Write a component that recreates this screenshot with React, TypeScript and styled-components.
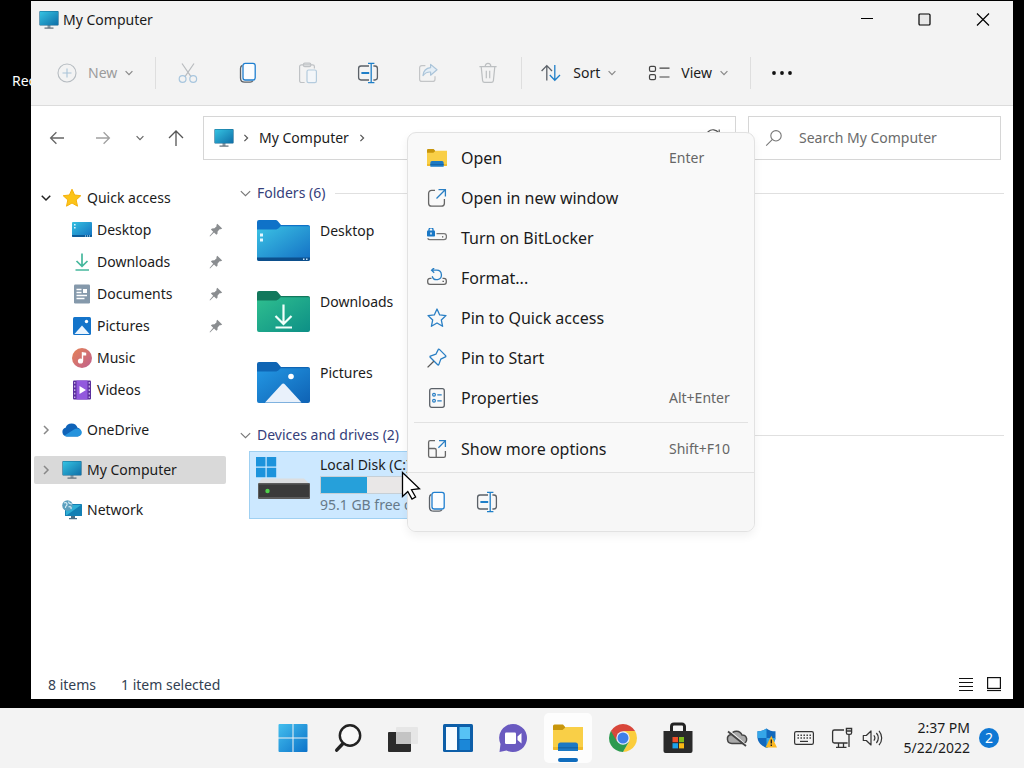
import React from 'react';
import styled, { createGlobalStyle, css } from 'styled-components';

const GlobalStyle = createGlobalStyle`
  * {
    box-sizing: border-box;
  }

  body {
    margin: 0;
    background: #000;
    font-family: 'Noto Sans', 'Open Sans', sans-serif;
    font-size: 14px;
    line-height: 20px;
    color: #1b1b1b;
  }

  button,
  input {
    font: inherit;
    color: inherit;
  }

  button {
    display: flex;
    align-items: center;
    justify-content: center;
    padding: 0;
    border: 0;
    background: none;
    cursor: default;
  }

  svg {
    display: block;
    flex: none;
  }
`;

/* ---------- icons ---------- */

type IconProps = { size?: number };

const MonitorIcon = ({ size = 20 }: IconProps) => (
  <svg width={size} height={size} viewBox="0 0 20 20">
    <defs>
      <linearGradient id="screen" x1="0" y1="0" x2="1" y2="1">
        <stop offset="0" stopColor="#35c3e2" />
        <stop offset="1" stopColor="#0f6fa8" />
      </linearGradient>
    </defs>
    <path d="M8.5 15h3v3h-3z" fill="#8b9aa5" />
    <path d="M5.5 17.5h9v1.2h-9z" fill="#5c6b76" />
    <rect x=".4" y="1" width="19.2" height="14.5" rx=".8" fill="#14668f" />
    <rect x="1" y="1.5" width="18" height="13.5" fill="url(#screen)" />
  </svg>
);

const Chevron = ({ dir, size = 8, color = '#555' }: { dir: 'down' | 'right'; size?: number; color?: string }) => (
  <svg width={size} height={size} viewBox="0 0 8 8" fill="none" stroke={color} strokeWidth={size > 10 ? 0.8 : 1.2}>
    <path d={dir === 'down' ? 'M.6 2.2 4 5.6l3.4-3.4' : 'M2.4.8 5.6 4 2.4 7.2'} />
  </svg>
);

const PlusCircleIcon = () => (
  <svg width="20" height="20" viewBox="0 0 20 20" fill="none" strokeWidth="1.1">
    <circle cx="10" cy="10" r="9" stroke="#b6bcc1" />
    <path d="M10 5.5v9M5.5 10h9" stroke="#a9c3d8" />
  </svg>
);

const CutIcon = () => (
  <svg width="20" height="22" viewBox="0 0 20 22" fill="none" strokeWidth="1.2">
    <path d="m4 1.5 9 13.2M16 1.5 7 14.7" stroke="#b9bcbf" />
    <circle cx="4.6" cy="17" r="3.4" stroke="#a8c6de" />
    <circle cx="15.2" cy="17" r="3.4" stroke="#a8c6de" />
  </svg>
);

const CopyIcon = () => (
  <svg width="20" height="22" viewBox="0 0 20 22" fill="none" strokeWidth="1.3">
    <path d="M4.4 3.4C3.1 3.9 2.5 4.9 2.5 6.4V16c0 2.6 1.6 4.2 4.2 4.2h5.5c1.3 0 2.2-.6 2.7-1.5" stroke="#5b6168" />
    <rect x="5" y="1.4" width="12.2" height="16.6" rx="2.2" fill="#fbfdff" stroke="#1f7fd0" />
  </svg>
);

const PasteIcon = () => (
  <svg width="20" height="22" viewBox="0 0 20 22" fill="none" strokeWidth="1.2">
    <path d="M6.6 20.5H3.4c-1 0-1.8-.8-1.8-1.8V4.6c0-1 .8-1.8 1.8-1.8h11.2c1 0 1.8.8 1.8 1.8v2" stroke="#bfc2c5" />
    <rect x="5.4" y="1.2" width="7.4" height="3.4" rx="1.4" stroke="#bfc2c5" />
    <rect x="9" y="8" width="9.4" height="12.6" rx="1.6" fill="#f3f6f9" stroke="#b4cbdd" />
  </svg>
);

const RenameIcon = () => (
  <svg width="22" height="22" viewBox="0 0 22 22" fill="none" strokeWidth="1.3">
    <path d="M12 4H4C2.6 4 1.6 5 1.6 6.4v9.2C1.6 17 2.6 18 4 18h8M16.4 4H18c1.4 0 2.4 1 2.4 2.4v9.2c0 1.4-1 2.4-2.4 2.4h-1.6" stroke="#5b6168" />
    <path d="M14.2 1.6v18.8M11 1.4h6.4M11 20.6h6.4" stroke="#1f7fc8" />
    <path d="M4.4 11h7.8" stroke="#1f7fc8" strokeWidth="2" />
  </svg>
);

const ShareIcon = () => (
  <svg width="20" height="20" viewBox="0 0 20 20" fill="none" strokeWidth="1.2" strokeLinejoin="round">
    <path d="M7.4 2.6H3.8c-1.3 0-2.2.9-2.2 2.2v11.4c0 1.3.9 2.2 2.2 2.2h11c1.3 0 2.2-.9 2.2-2.2v-3" stroke="#c3c5c7" />
    <path d="M12.6 1.4 19 6.8l-6.4 5.4V9c-3.4-.2-5.6.8-7.6 3.6C5.4 8 8 5 12.6 4.6z" fill="#e4eef6" stroke="#aac4d9" />
  </svg>
);

const TrashIcon = () => (
  <svg width="20" height="22" viewBox="0 0 20 22" fill="none" stroke="#bcbfc1" strokeWidth="1.2">
    <path d="M1.4 4.6h17.2M3.2 4.6l1.4 14c.1 1 .9 1.8 2 1.8h6.8c1.1 0 1.9-.8 2-1.8l1.4-14M7.2 4.4C7.2 2.6 8.4 1.4 10 1.4s2.8 1.2 2.8 3M8.3 8.8v7.4M11.7 8.8v7.4" />
  </svg>
);

const SortIcon = () => (
  <svg width="22" height="20" viewBox="0 0 22 20" fill="none" strokeWidth="1.3">
    <path d="M6.8 17.5V2.6M1.6 8l5.2-5.4L12 8" stroke="#5b6168" />
    <path d="M14.8 2v15M9.8 12l5 5.2L20 12" stroke="#1f7fc8" />
  </svg>
);

const ViewIcon = () => (
  <svg width="22" height="18" viewBox="0 0 22 18" fill="none" stroke="#444" strokeWidth="1.2">
    <rect x="1.5" y="2.3" width="6" height="5" rx="1.4" />
    <rect x="1.5" y="10.7" width="6" height="5" rx="1.4" />
    <path d="M11.5 4.2h10M11.5 13h10" />
  </svg>
);

const DotsIcon = () => (
  <svg width="22" height="6" viewBox="0 0 22 6" fill="#111">
    <circle cx="3" cy="3" r="1.9" />
    <circle cx="11" cy="3" r="1.9" />
    <circle cx="19" cy="3" r="1.9" />
  </svg>
);

const ArrowIcon = ({ dir, color }: { dir: 'left' | 'right' | 'up'; color: string }) => (
  <svg width="18" height="18" viewBox="0 0 18 18" fill="none" stroke={color} strokeWidth="1.3">
    {dir === 'left' && <path d="M16 9H2.6M8.4 3.2 2.6 9l5.8 5.8" />}
    {dir === 'right' && <path d="M2 9h13.4M9.6 3.2 15.4 9l-5.8 5.8" />}
    {dir === 'up' && <path d="M9 17V2M2 9l7-7 7 7" />}
  </svg>
);

const SearchIcon = () => (
  <svg width="18" height="18" viewBox="0 0 18 18" fill="none" stroke="#777" strokeWidth="1.1">
    <circle cx="11" cy="6.8" r="5.2" />
    <path d="m7.2 10.6-6 6" />
  </svg>
);

const RefreshIcon = () => (
  <svg width="18" height="18" viewBox="0 0 18 18" fill="none" stroke="#555" strokeWidth="1.2">
    <path d="M15.5 9.5A6.8 6.8 0 1 1 14.8 4M15.2.5v4H11" />
  </svg>
);

const StarIcon = () => (
  <svg width="20" height="20" viewBox="0 0 20 20">
    <path d="m10 1.2 2.6 5.8 6.2.7-4.6 4.2 1.3 6.3L10 15l-5.5 3.2 1.3-6.3-4.6-4.2 6.2-.7z" fill="#fcc419" stroke="#f5b10c" strokeLinejoin="round" />
  </svg>
);

const DesktopIcon = () => (
  <svg width="20" height="20" viewBox="0 0 20 20">
    <defs>
      <linearGradient id="desk" x1="0" y1="0" x2="1" y2="1">
        <stop offset="0" stopColor="#36c0e0" />
        <stop offset="1" stopColor="#1270c0" />
      </linearGradient>
    </defs>
    <rect y="2" width="20" height="15" rx="1" fill="url(#desk)" />
    <path d="M0 15h20v1a1 1 0 0 1-1 1H1a1 1 0 0 1-1-1z" fill="#0d5c99" />
    <path d="M2 4h1.6v1.6H2zM2 7h1.6v1.6H2zM13 15.5h1v1h-1zM15 15.5h1v1h-1zM17 15.5h1v1h-1z" fill="#d8f4ff" />
  </svg>
);

const DownloadIcon = () => (
  <svg width="20" height="20" viewBox="0 0 20 20" fill="none" stroke="#45b89d" strokeWidth="1.7">
    <path d="M10 1.5v12.8M4.5 9 10 14.4 15.5 9M3.5 18H17" />
  </svg>
);

const DocumentIcon = () => (
  <svg width="20" height="20" viewBox="0 0 20 20">
    <rect x="2" y=".5" width="16" height="19" rx="1.2" fill="#8599ab" />
    <path d="M4.5 5.5h5M4.5 8.5h5M4.5 11.5H15M4.5 14.5h8" stroke="#fff" strokeWidth="1.3" />
    <path d="M11 5h4v4h-4z" fill="#fff" />
  </svg>
);

const PictureIcon = () => (
  <svg width="20" height="20" viewBox="0 0 20 20">
    <rect x="1" y="1" width="18" height="18" rx="1.5" fill="#1474ca" />
    <path d="m2.5 18 7.5-8.5 7.5 8.5z" fill="#eaf5ff" />
    <circle cx="14.5" cy="5.5" r="1.7" fill="#fff" />
  </svg>
);

const MusicIcon = () => (
  <svg width="20" height="20" viewBox="0 0 20 20">
    <defs>
      <linearGradient id="music" x1="0" y1="0" x2="1" y2="1">
        <stop offset="0" stopColor="#e58355" />
        <stop offset="1" stopColor="#c0608f" />
      </linearGradient>
    </defs>
    <circle cx="10" cy="10" r="10" fill="url(#music)" />
    <circle cx="8.5" cy="13" r="2.6" fill="#fff" />
    <path d="M9.8 4v9h1.4V7.4h3V4.8z" fill="#fff" />
  </svg>
);

const VideoIcon = () => (
  <svg width="20" height="20" viewBox="0 0 20 20">
    <rect x="1" y=".5" width="18" height="19" rx="1" fill="#5b2f9e" />
    <rect x="4.5" y=".5" width="11" height="19" fill="#9259dd" />
    <path d="M2.7 2v16M17.3 2v16" stroke="#c9b2ea" strokeWidth="1.3" strokeDasharray="1.8 1.8" />
    <path d="m7.5 6 6.5 4-6.5 4z" fill="#fff" />
  </svg>
);

const CloudIcon = () => (
  <svg width="20" height="20" viewBox="0 0 20 20">
    <path d="M4.8 16.5A4.5 4.5 0 0 1 3.6 7.7 6.4 6.4 0 0 1 15.6 7.8 4.5 4.5 0 0 1 15.6 16.5z" fill="#0f63b8" />
    <path d="M2.2 15.7 12 9.6c2-1.8 6.5-1.5 7.6 1.6.9 2.8-1 5.3-4 5.3H4.8c-1 0-1.9-.3-2.6-.8z" fill="#2593dd" />
  </svg>
);

const NetworkIcon = () => (
  <svg width="20" height="20" viewBox="0 0 20 20">
    <path d="M9 15h4v3H9zM7 18h8v1.2H7z" fill="#4c6f87" />
    <rect x="3" y="4" width="17" height="12" rx=".6" fill="#1480b4" />
    <path d="M4 5h15L5 15H4z" fill="#2faed4" />
    <circle cx="5.5" cy="5.5" r="5.3" fill="#5c9fbe" />
    <path d="M2 3c2-1 3 0 3 1.5S3 6 3.5 8M7 1.5C6 3 8 4 10 4M6.5 7c2-1 3 0 2.5 2" stroke="#d5ecf5" strokeWidth="1.2" fill="none" />
  </svg>
);

const PinnedIcon = () => (
  <svg width="14" height="14" viewBox="0 0 14 14">
    <path d="M8.3.8 13.2 5.5 11.8 6.3 10.6 6.2 8.6 8.4 8.5 10.8 7.4 11.8 5 9.5 1 13.4.6 13 4.2 8.7 1.9 6.4 3 5.4 5.5 5.3 7.6 3.2 7.4 1.9z" fill="#8a8d90" />
  </svg>
);

type FolderKind = 'desktop' | 'downloads' | 'pictures';

const folderColors: Record<FolderKind, [string, string, string]> = {
  desktop: ['#0f72c8', '#3cc3e4', '#136fc4'],
  downloads: ['#12785c', '#2fbf8f', '#0d8f86'],
  pictures: ['#0f65b4', '#2397e3', '#0f62b4'],
};

const FolderArt = ({ kind }: { kind: FolderKind }) => {
  const [tab, from, to] = folderColors[kind];
  return (
    <svg width="54" height="42" viewBox="0 0 54 42">
      <defs>
        <linearGradient id={`folder-${kind}`} x1="0" y1="0" x2="1" y2="1">
          <stop offset="0" stopColor={from} />
          <stop offset="1" stopColor={to} />
        </linearGradient>
      </defs>
      <path d="M0 2a2 2 0 0 1 2-2h16.5c1 0 1.8.4 2.4 1.2L24 5h27a2 2 0 0 1 2 2v10H0z" fill={tab} />
      <path d="M0 9.5h18c2 0 3-.6 4.2-1.8l1.4-1.5h27.900A1.5 1.5 0 0 1 53 7.7V39a2 2 0 0 1-2 2H2a2 2 0 0 1-2-2z" fill={`url(#folder-${kind})`} />
      {kind === 'desktop' && (
        <>
          <path d="M0 37.5h53V39a2 2 0 0 1-2 2H2a2 2 0 0 1-2-2z" fill="#0c4f8c" />
          <path d="M3 13.5h3v3H3zM3 18.5h3v3H3z" fill="#e4f8ff" />
          <path d="M46 38.5h1.5V40H46zM49 38.5h1.5V40H49z" fill="#cdeaff" />
        </>
      )}
      {kind === 'downloads' && (
        <path d="M26.5 13.5v19M18.5 25l8 8 8-8M18.5 36.5H35" fill="none" stroke="#f2fffb" strokeWidth="2.2" />
      )}
      {kind === 'pictures' && (
        <>
          <path d="M8 40.500 24.5 22.500c1.1-1.2 2.4-1.2 3.5 0L44.5 40.5z" fill="#e9f1fb" />
          <circle cx="34" cy="14.5" r="2.8" fill="#fff" />
        </>
      )}
    </svg>
  );
};

const DriveArt = () => (
  <svg width="54" height="46" viewBox="0 0 54 46">
    <path d="M0 1h9.500v9.500H0zM10.700 1h9.500v9.500h-9.500zM0 11.700h9.500v9.500H0zM10.700 11.700h9.500v9.500h-9.500z" fill="#1c93dc" />
    <path d="M6 22.500h42l5 5H2z" fill="#dcdee0" />
    <rect x="2" y="27" width="52" height="16" rx="1" fill="#5c5c5c" />
    <rect x="3" y="28.5" width="50" height="12.5" fill="#3a3a3a" />
    <circle cx="11.5" cy="35" r="2.2" fill="#4fd14b" />
  </svg>
);

const OpenFolderIcon = ({ size = 20 }: IconProps) => (
  <svg width={size} height={size} viewBox="0 0 30 30">
    <path d="M0 3a1.5 1.5 0 0 1 1.5-1.5H10L13 5 10 8H0z" fill="#c8960c" />
    <path d="M0 7h9.5L13 4h17v22a1 1 0 0 1-1 1H1a1 1 0 0 1-1-1z" fill="#f9cf47" />
    <path d="M0 24h30v2a1 1 0 0 1-1 1H1a1 1 0 0 1-1-1z" fill="#efb92b" />
    <path d="M5 28v-6a2.5 2.5 0 0 1 2.5-2.5h15A2.5 2.5 0 0 1 25 22v6z" fill="#1c79c4" />
    <path d="M5 24h20v1.5H5z" fill="#1666a8" />
  </svg>
);

const NewWindowIcon = () => (
  <svg width="20" height="20" viewBox="0 0 20 20" fill="none" strokeWidth="1.3">
    <path d="M8 2.4H4.6c-1.7 0-3 1.3-3 3v9.8c0 1.7 1.3 3 3 3h9.8c1.7 0 3-1.3 3-3V11" stroke="#666" />
    <path d="M11.5 1.6h6.9v7M18.2 1.8 9.5 10.5" stroke="#2a7fc4" />
  </svg>
);

const BitLockerIcon = () => (
  <svg width="20" height="20" viewBox="0 0 20 20" fill="none">
    <path d="M9.5 5.7H17c1.4 0 2.4 1 2.4 2.4v1.2c0 1.4-1 2.4-2.4 2.4H3c-1.2 0-2-.6-2.3-1.5" stroke="#777" strokeWidth="1.3" />
    <path d="M15 8.2h1.3v1.3H15z" fill="#555" />
    <path d="M2 3V1.8a2 2 0 0 1 4 0V3" stroke="#1a78c6" strokeWidth="1.3" />
    <rect y="2.6" width="8" height="6" rx=".8" fill="#1a78c6" />
    <path d="M3.3 4.5h1.4v2H3.3z" fill="#fff" />
  </svg>
);

const FormatIcon = () => (
  <svg width="20" height="20" viewBox="0 0 20 20" fill="none" strokeWidth="1.3">
    <path d="M4.5 10.4H3a2.3 2.3 0 0 0-2.3 2.3v1.4A2.3 2.3 0 0 0 3 16.4h14a2.3 2.3 0 0 0 2.3-2.3v-1.4a2.3 2.3 0 0 0-2.3-2.3h-1.5" stroke="#666" />
    <path d="M15.5 12.8h1.4v1.3h-1.4z" fill="#555" />
    <path d="M7.2-.2 4.6 2.2l2.6 2.500M4.8 2.2h4.9a4.7 4.7 0 1 1-4.5 6" stroke="#2a7fc4" />
  </svg>
);

const OutlineStarIcon = () => (
  <svg width="20" height="20" viewBox="0 0 20 20" fill="none" stroke="#2a7fc4" strokeWidth="1.3" strokeLinejoin="round">
    <path d="m10 1 2.7 5.9 6.3.7-4.7 4.3 1.3 6.4L10 15l-5.6 3.3 1.3-6.4L1 7.6l6.3-.7z" />
  </svg>
);

const PinIcon = () => (
  <svg width="20" height="20" viewBox="0 0 20 20" fill="none" strokeWidth="1.3" strokeLinejoin="round">
    <path d="M12.4 1.4 18.6 7.6c.4.4.3 1-.2 1.2L13.8 11.1 11.8 16.6c-.2.5-.7.6-1.1.2L3.2 9.3c-.4-.4-.2-.9.2-1.1L8.9 6.2 11.2 1.6c.2-.5.8-.6 1.2-.2z" stroke="#2a7fc4" />
    <path d="m6.8 13.2-6.2 6.2" stroke="#555" />
  </svg>
);

const PropertiesIcon = () => (
  <svg width="20" height="20" viewBox="0 0 20 20" fill="none">
    <rect x="2.7" y=".7" width="14.6" height="18.6" rx="2" stroke="#5b6168" strokeWidth="1.3" />
    <circle cx="7" cy="6.8" r="1.4" stroke="#2a7fc4" strokeWidth="1.2" />
    <circle cx="7" cy="12.8" r="1.4" stroke="#2a7fc4" strokeWidth="1.2" />
    <path d="M10.3 6.8h4.4M10.3 12.8h4.4" stroke="#2a7fc4" strokeWidth="1.3" />
  </svg>
);

const MoreOptionsIcon = () => (
  <svg width="20" height="20" viewBox="0 0 20 20" fill="none" strokeWidth="1.3">
    <path d="M8 1.7H3.2c-.9 0-1.6.7-1.6 1.6v13.4c0 .9.7 1.6 1.6 1.6h13.6c.9 0 1.6-.7 1.6-1.6V12M1.6 9.5h6c.9 0 1.6.7 1.6 1.6v7.2" stroke="#666" />
    <path d="M12 1.7h6.4v6.4M18.2 1.9l-6.8 6.8" stroke="#2a7fc4" />
  </svg>
);

const PointerIcon = () => (
  <svg width="20" height="30" viewBox="0 0 20 30">
    <path d="M1.5 1.5v24l5.3-5 4.2 7.5 3.6-2-4.1-7.3 8-1z" fill="#fff" stroke="#000" strokeWidth="1.3" />
  </svg>
);

const StartIcon = () => (
  <svg width="30" height="30" viewBox="0 0 30 30">
    <defs>
      <linearGradient id="start" gradientUnits="userSpaceOnUse" x1="0" y1="0" x2="30" y2="30">
        <stop offset="0" stopColor="#45c1ef" />
        <stop offset="1" stopColor="#0a70c8" />
      </linearGradient>
    </defs>
    <path d="M.5 2a1 1 0 0 1 1-1h13v13.5H.5zM15.5 1h13a1 1 0 0 1 1 1v12.5h-14zM.5 15.5h14V29h-13a1 1 0 0 1-1-1zM15.5 15.5h14V28a1 1 0 0 1-1 1h-13z" fill="url(#start)" />
  </svg>
);

const TaskSearchIcon = () => (
  <svg width="30" height="30" viewBox="0 0 30 30" fill="none" stroke="#222" strokeLinecap="round">
    <circle cx="17" cy="12.5" r="10.2" strokeWidth="2.4" fill="#f8f8f8" />
    <path d="m9.5 21-5.8 6.2" strokeWidth="3.4" />
  </svg>
);

const TaskViewIcon = () => (
  <svg width="30" height="30" viewBox="0 0 30 30">
    <rect x="0" y="9" width="23" height="20" rx="1" fill="#2b2b2b" />
    <rect x="8" y="4" width="22" height="17" rx="1" fill="#e6e6e6" />
    <path d="M8 9h15v12H8z" fill="#c4c4c4" />
  </svg>
);

const WidgetsIcon = () => (
  <svg width="30" height="30" viewBox="0 0 30 30">
    <rect x="0" y="1" width="30" height="28" rx="1.5" fill="#0d5ea8" />
    <path d="M3 4h11v23H3z" fill="#f7fbff" />
    <path d="M16.5 4H27v12H16.5z" fill="#57c2f5" />
    <path d="M16.5 16.5H27V27H16.5z" fill="#1b87d8" />
  </svg>
);

const ChatIcon = () => (
  <svg width="30" height="30" viewBox="0 0 30 30">
    <path d="M15 1a14 14 0 1 1-6.5 26.4L1.5 29l1-8A14 14 0 0 1 15 1z" fill="#6a5ac0" />
    <rect x="7" y="9.5" width="11" height="11.5" rx="1.2" fill="#fff" />
    <path d="M19.5 13.5 23.5 10v10.5l-4-3.5z" fill="#fff" />
  </svg>
);

const ChromeIcon = () => (
  <svg width="30" height="30" viewBox="0 0 30 30">
    <path d="M15 15 2.88 8A14 14 0 0 1 27.12 8z" fill="#d8463a" />
    <path d="M15 15v14A14 14 0 0 1 2.88 8z" fill="#2c9a4f" />
    <path d="M15 8h12.1A14 14 0 0 1 15 29l6-10.5z" fill="#fbcd3c" />
    <path d="M9 18.5 2.88 8 9 11z" fill="#d8463a" />
    <path d="M21 18.5 15 29l-6-8z" fill="#2c9a4f" />
    <circle cx="15" cy="15" r="6.7" fill="#e8eefb" />
    <circle cx="15" cy="15" r="5.5" fill="#3f80e8" />
  </svg>
);

const StoreIcon = () => (
  <svg width="30" height="32" viewBox="0 0 30 32">
    <path d="M8.5 9V4.500A2.5 2.5 0 0 1 11 2h8a2.5 2.5 0 0 1 2.5 2.5V9" fill="none" stroke="#222" strokeWidth="3" />
    <path d="M.5 9h29v20a2 2 0 0 1-2 2h-25a2 2 0 0 1-2-2z" fill="#2a2a2a" />
    <path d="M9.5 15H15v5.2H9.5z" fill="#ef4f2a" />
    <path d="M16 15h5v5.2h-5z" fill="#7fba1c" />
    <path d="M9.5 21.2H15v5.2H9.5z" fill="#1ba1ea" />
    <path d="M16 21.2h5v5.2h-5z" fill="#fbb914" />
  </svg>
);

const CloudOffIcon = () => (
  <svg width="22" height="20" viewBox="0 0 22 20" fill="none" stroke="#444" strokeWidth="1.5">
    <path d="M6 15.5a4.5 4.5 0 0 1-1-8.9 6 6 0 0 1 11 .4 4.3 4.3 0 0 1 1.2 8.5z" fill="#a9a9a9" />
    <path d="m3.5 2.8 17 14.5" stroke="#f3f3f3" />
    <path d="m2 3.5 18 14.5" strokeWidth="1.8" />
  </svg>
);

const ShieldIcon = () => (
  <svg width="20" height="20" viewBox="0 0 20 20">
    <path d="M9.5.5C12 2.5 15 3.3 18.5 3.3V9c0 5-3.5 8.5-9 11C4 17.5.5 14 .5 9V3.3C4 3.3 7 2.5 9.5.5z" fill="#1269bd" />
    <path d="M9.5.5V10h-9V3.3C4 3.3 7 2.5 9.5.5zM9.5 10h9c-.3 4.5-3.8 7.7-9 10z" fill="#35a6e8" />
    <path d="M14.3 7.8 20 19.5H8.5z" fill="#fbb822" />
    <path d="M13.6 11.5H15v4h-1.4zM13.6 16.5H15V18h-1.4z" fill="#222" />
  </svg>
);

const KeyboardIcon = () => (
  <svg width="20" height="14" viewBox="0 0 20 14" fill="none" stroke="#333">
    <rect x=".6" y=".6" width="18.8" height="12.8" rx="1.6" strokeWidth="1.2" />
    <path d="M3.5 4.2H17M3.5 7H17" strokeWidth="1.4" strokeDasharray="1.4 1.6" />
    <path d="M6 10.4h8" strokeWidth="1.2" />
  </svg>
);

const EthernetIcon = () => (
  <svg width="22" height="22" viewBox="0 0 22 22" fill="none" stroke="#333" strokeWidth="1.3">
    <path d="M13 3H3.4C2.3 3 1.6 3.7 1.6 4.8v9.4c0 1.1.7 1.8 1.8 1.8h13.2M7.5 16v4M12.5 16v4M5 20.3h10.5M18 7.5V20" />
    <path d="M15.4 1.5h5.2v4.2c0 1-.7 1.7-1.7 1.7h-1.8c-1 0-1.7-.7-1.7-1.7zM15.4 4h5.2" />
  </svg>
);

const SpeakerIcon = () => (
  <svg width="22" height="18" viewBox="0 0 22 18" fill="none" stroke="#333" strokeWidth="1.2" strokeLinejoin="round">
    <path d="M1.3 6.5h3L9 2v14l-4.7-4.5h-3z" />
    <path d="M11.8 6.4a4 4 0 0 1 0 5.2M14.4 4a7.5 7.5 0 0 1 0 10M17 1.8a11 11 0 0 1 0 14.4" />
  </svg>
);

/* ---------- data ---------- */

const quickAccess = [
  { label: 'Desktop', icon: <DesktopIcon />, pinned: true },
  { label: 'Downloads', icon: <DownloadIcon />, pinned: true },
  { label: 'Documents', icon: <DocumentIcon />, pinned: true },
  { label: 'Pictures', icon: <PictureIcon />, pinned: true },
  { label: 'Music', icon: <MusicIcon />, pinned: false },
  { label: 'Videos', icon: <VideoIcon />, pinned: false },
];

const folders: { label: string; kind: FolderKind }[] = [
  { label: 'Desktop', kind: 'desktop' },
  { label: 'Downloads', kind: 'downloads' },
  { label: 'Pictures', kind: 'pictures' },
];

const menuItems = [
  { label: 'Open', icon: <OpenFolderIcon />, shortcut: 'Enter' },
  { label: 'Open in new window', icon: <NewWindowIcon /> },
  { label: 'Turn on BitLocker', icon: <BitLockerIcon /> },
  { label: 'Format...', icon: <FormatIcon /> },
  { label: 'Pin to Quick access', icon: <OutlineStarIcon /> },
  { label: 'Pin to Start', icon: <PinIcon /> },
  { label: 'Properties', icon: <PropertiesIcon />, shortcut: 'Alt+Enter' },
];

const taskbarApps = [
  { label: 'Start', icon: <StartIcon /> },
  { label: 'Search', icon: <TaskSearchIcon /> },
  { label: 'Task view', icon: <TaskViewIcon /> },
  { label: 'Widgets', icon: <WidgetsIcon /> },
  { label: 'Chat', icon: <ChatIcon /> },
  { label: 'File Explorer', icon: <OpenFolderIcon size={30} />, active: true },
  { label: 'Chrome', icon: <ChromeIcon /> },
  { label: 'Microsoft Store', icon: <StoreIcon /> },
];

// percent of the drive in use
const usedShare = 28;

/* ---------- layout ---------- */

const Screen = styled.div`
  min-height: 100vh;
  display: flex;
  flex-direction: column;
`;

const Desktop = styled.div`
  position: relative;
  flex: 1;
  display: flex;
  padding: 1px 11px 9px 31px;
  overflow: hidden;
`;

const DesktopShortcut = styled.div`
  position: absolute;
  top: 71px;
  left: 12px;
  color: #fff;
  white-space: nowrap;
`;

const Window = styled.div`
  position: relative;
  flex: 1;
  min-width: 0;
  display: flex;
  flex-direction: column;
  background: #fff;
`;

const TitleBar = styled.header`
  display: flex;
  align-items: center;
  height: 38px;
  padding-left: 8px;
  gap: 4px;
  background: #f3f3f3;
`;

const Title = styled.h1`
  flex: 1;
  margin: 0;
  font-size: 14px;
  font-weight: 400;
`;

const CaptionButton = styled.button`
  width: 58px;
  height: 36px;
`;

const CaptionButtons = styled.div`
  display: flex;
  padding-right: 1px;
`;

const Toolbar = styled.div`
  display: flex;
  align-items: center;
  height: 67px;
  padding: 1px 0 0 26px;
  background: #f3f3f3;
  border-bottom: 1px solid #dcdcdc;
`;

const ToolButton = styled.button<{ $dim?: boolean }>`
  gap: 11px;
  height: 40px;
  color: ${({ $dim }) => ($dim ? '#9b9b9b' : '#1b1b1b')};
`;

const ToolLabel = styled.span`
  display: flex;
  align-items: center;
  gap: 8px;
`;

const ToolIcons = styled.div`
  display: flex;
  padding: 0 3px 0 2px;

  button {
    width: 60px;
    height: 40px;
  }
`;

const ToolPair = styled.div`
  display: flex;
  gap: 32px;
`;

const Divider = styled.span<{ $before?: number; $after?: number }>`
  width: 1px;
  height: 32px;
  margin: 0 ${({ $after = 0 }) => $after}px 0 ${({ $before = 0 }) => $before}px;
  background: #dedede;
`;

const NavRow = styled.nav`
  display: flex;
  align-items: center;
  padding: 10px 12px 0 17px;
`;

const NavButtons = styled.div`
  display: grid;
  grid-template-columns: 46px 42px 31px 18px;
  align-items: center;
  justify-items: start;
  margin-right: 18px;
`;

const fieldBox = css`
  display: flex;
  align-items: center;
  height: 44px;
  border: 1px solid #d6d6d6;
  background: #fff;
`;

const AddressBar = styled.div`
  ${fieldBox}
  flex: 1;
  gap: 8px;
  padding: 0 13px 0 10px;
`;

const Crumb = styled.span`
  flex: none;
  padding: 0 1px;
`;

const Spacer = styled.span`
  flex: 1;
`;

const SearchBox = styled.label`
  ${fieldBox}
  width: 253px;
  margin-left: 12px;
  padding: 0 8px 0 16px;
  gap: 16px;
`;

const SearchInput = styled.input`
  flex: 1;
  min-width: 0;
  padding: 0;
  border: 0;
  outline: 0;
  background: none;

  &::placeholder {
    color: #6b6b6b;
    opacity: 1;
  }
`;

const Body = styled.div`
  flex: 1;
  display: flex;
  min-height: 0;
`;

const Sidebar = styled.aside`
  width: 198px;
  flex: none;
  padding: 22px 3px 0;
`;

const TreeRow = styled.div<{ $nested?: boolean; $selected?: boolean; $gap?: boolean }>`
  display: flex;
  align-items: center;
  height: 28px;
  margin: ${({ $gap }) => ($gap ? '12px' : '4px')} 0 0;
  padding: 0 3px 0 ${({ $nested }) => ($nested ? '38px' : '7px')};
  gap: ${({ $nested }) => ($nested ? '5px' : '9px')};
  border-radius: 2px;
  background: ${({ $selected }) => ($selected ? '#d9d9d9' : 'transparent')};

  &:first-child {
    margin-top: 2px;
  }
`;

const TreeToggle = styled.span`
  display: flex;
  width: 12px;
`;

const TreeLabel = styled.span`
  display: flex;
  align-items: center;
  gap: 5px;
`;

const Content = styled.main`
  flex: 1;
  min-width: 0;
  padding: 22px 9px 0 11px;
`;

const GroupHeader = styled.h2`
  display: flex;
  align-items: center;
  gap: 6px;
  height: 22px;
  margin: 0;
  font-size: 14px;
  font-weight: 400;
  color: #35407a;

  &::after {
    content: '';
    flex: 1;
    height: 1px;
    margin-left: 4px;
    background: #e0e0e0;
  }
`;

const FolderList = styled.div`
  padding: 7px 0 0 9px;
`;

const Tile = styled.div`
  display: flex;
  align-items: flex-start;
  width: 246px;
  height: 71px;
  padding: 9px 8px 0;
  gap: 9px;
`;

const TileLabel = styled.span`
  padding-top: 1px;
`;

const DriveTile = styled.div`
  display: flex;
  width: 246px;
  height: 68px;
  margin: 5px 0 0 9px;
  padding: 4px 7px 0 6px;
  gap: 10px;
  background: #cce8ff;
  border: 1px solid #9fd0f2;
`;

const DriveInfo = styled.div`
  flex: 1;
  display: flex;
  flex-direction: column;
  gap: 1px;
  margin-top: -1px;
`;

const UsageTrack = styled.div`
  height: 18px;
  border: 1px solid #c6cfd6;
  background: #e9e7e7;
`;

const UsageFill = styled.div`
  height: 100%;
  background: #26a0da;
`;

const FreeSpace = styled.span`
  color: #667a8a;
`;

const StatusBar = styled.footer`
  display: flex;
  align-items: center;
  height: 29px;
  padding: 0 11px 0 17px;
  gap: 25px;
  color: #333f52;
`;

const ViewModes = styled.div`
  display: flex;
  gap: 12px;
  margin-left: auto;
`;

const ContextMenu = styled.div`
  position: absolute;
  top: 131px;
  left: 376px;
  width: 348px;
  padding-top: 5px;
  background: #f9f9f9;
  border: 1px solid #e2e2e2;
  border-radius: 9px;
  box-shadow: 0 4px 10px rgb(0 0 0 / 0.06);
`;

const MenuItem = styled.button`
  width: 100%;
  height: 40px;
  padding: 0 0 0 19px;
  gap: 14px;
  justify-content: flex-start;
  text-align: left;
  font-size: 16px;
`;

const MenuLabel = styled.span`
  width: 194px;
`;

const Shortcut = styled.span`
  font-size: 14px;
  color: #666;
`;

const MenuRule = styled.hr`
  margin: 4px 6px 6px;
  border: 0;
  border-top: 1px solid #e2e2e2;
`;

const MenuActions = styled.div`
  display: flex;
  gap: 29px;
  margin-top: 3px;
  padding: 18px 19px;
  border-top: 1px solid #e2e2e2;
  border-radius: 0 0 8px 8px;
  background: #f7f7f7;
`;

const Pointer = styled.div`
  position: absolute;
  top: 470px;
  left: 370px;
`;

const Taskbar = styled.footer`
  display: grid;
  grid-template-columns: 1fr 440px minmax(319px, 1fr);
  align-items: center;
  height: 60px;
  background: #f3f3f3;
`;

const AppList = styled.div`
  grid-column: 2;
  display: grid;
  grid-template-columns: repeat(8, 55px);
  justify-items: center;
`;

const AppButton = styled.button<{ $active?: boolean }>`
  position: relative;
  width: 48px;
  height: 50px;
  border-radius: 5px;
  background: ${({ $active }) => ($active ? '#fdfdfd' : 'transparent')};

  &::after {
    content: '';
    display: ${({ $active }) => ($active ? 'block' : 'none')};
    position: absolute;
    bottom: 1px;
    left: 14px;
    width: 20px;
    height: 4px;
    border-radius: 2px;
    background: #0f6cbd;
  }
`;

const Tray = styled.div`
  display: flex;
  align-items: center;
  justify-content: flex-end;
  padding-right: 25px;
  gap: 17px;
`;

const TrayGroup = styled.div`
  display: flex;
  align-items: center;
  gap: 9px;
`;

const ClockArea = styled.div`
  display: flex;
  align-items: center;
  gap: 9px;
  padding-left: 3px;
`;

const Clock = styled.time`
  text-align: right;
  white-space: nowrap;
`;

const Badge = styled.span`
  display: flex;
  align-items: center;
  justify-content: center;
  width: 20px;
  height: 20px;
  border-radius: 50%;
  background: #0f78d4;
  color: #fff;
`;

/* ---------- pieces ---------- */

const ExplorerToolbar = () => (
  <Toolbar>
    <ToolButton $dim>
      <PlusCircleIcon />
      <ToolLabel>
        New <Chevron dir="down" color="#888" />
      </ToolLabel>
    </ToolButton>
    <Divider $before={22} />
    <ToolIcons>
      <button aria-label="Cut"><CutIcon /></button>
      <button aria-label="Copy"><CopyIcon /></button>
      <button aria-label="Paste"><PasteIcon /></button>
      <button aria-label="Rename"><RenameIcon /></button>
      <button aria-label="Share"><ShareIcon /></button>
      <button aria-label="Delete"><TrashIcon /></button>
    </ToolIcons>
    <Divider $after={18} />
    <ToolPair>
      <ToolButton>
        <SortIcon />
        <ToolLabel>
          Sort <Chevron dir="down" color="#888" />
        </ToolLabel>
      </ToolButton>
      <ToolButton>
        <ViewIcon />
        <ToolLabel>
          View <Chevron dir="down" color="#888" />
        </ToolLabel>
      </ToolButton>
    </ToolPair>
    <Divider $before={22} $after={20} />
    <ToolButton aria-label="See more">
      <DotsIcon />
    </ToolButton>
  </Toolbar>
);

const SideTree = () => (
  <Sidebar>
    <TreeRow>
      <TreeToggle><Chevron dir="down" size={10} color="#222" /></TreeToggle>
      <TreeLabel><StarIcon />Quick access</TreeLabel>
    </TreeRow>
    {quickAccess.map(({ label, icon, pinned }) => (
      <TreeRow key={label} $nested>
        {icon}
        {label}
        {pinned && (
          <>
            <Spacer />
            <PinnedIcon />
          </>
        )}
      </TreeRow>
    ))}
    <TreeRow $gap>
      <TreeToggle><Chevron dir="right" size={10} color="#888" /></TreeToggle>
      <TreeLabel><CloudIcon />OneDrive</TreeLabel>
    </TreeRow>
    <TreeRow $gap $selected>
      <TreeToggle><Chevron dir="right" size={10} color="#888" /></TreeToggle>
      <TreeLabel><MonitorIcon />My Computer</TreeLabel>
    </TreeRow>
    <TreeRow $gap>
      <TreeToggle />
      <TreeLabel><NetworkIcon />Network</TreeLabel>
    </TreeRow>
  </Sidebar>
);

const DriveMenu = () => (
  <ContextMenu role="menu">
    {menuItems.map(({ label, icon, shortcut }) => (
      <MenuItem key={label} role="menuitem">
        {icon}
        <MenuLabel>{label}</MenuLabel>
        {shortcut && <Shortcut>{shortcut}</Shortcut>}
      </MenuItem>
    ))}
    <MenuRule />
    <MenuItem role="menuitem">
      <MoreOptionsIcon />
      <MenuLabel>Show more options</MenuLabel>
      <Shortcut>Shift+F10</Shortcut>
    </MenuItem>
    <MenuActions>
      <button aria-label="Copy"><CopyIcon /></button>
      <button aria-label="Rename"><RenameIcon /></button>
    </MenuActions>
  </ContextMenu>
);

const App: React.FC = () => (
  <>
    <GlobalStyle />
    <Screen>
      <Desktop>
        <DesktopShortcut>Rec</DesktopShortcut>
        <Window>
          <TitleBar>
            <MonitorIcon />
            <Title>My Computer</Title>
            <CaptionButtons>
              <CaptionButton aria-label="Minimize">
                <svg width="14" height="14" viewBox="0 0 14 14"><path d="M1 5.5h12" stroke="#000" /></svg>
              </CaptionButton>
              <CaptionButton aria-label="Maximize">
                <svg width="14" height="14" viewBox="0 0 14 14"><rect x="1" y="1" width="11" height="11" rx="1" fill="#e8e8e8" stroke="#000" strokeWidth="1.2" /></svg>
              </CaptionButton>
              <CaptionButton aria-label="Close">
                <svg width="14" height="14" viewBox="0 0 14 14"><path d="m1 .5 12 12M13 .5l-12 12" stroke="#000" strokeWidth="1.2" /></svg>
              </CaptionButton>
            </CaptionButtons>
          </TitleBar>
          <ExplorerToolbar />
          <NavRow>
            <NavButtons>
              <button aria-label="Back"><ArrowIcon dir="left" color="#666" /></button>
              <button aria-label="Forward"><ArrowIcon dir="right" color="#a0a0a0" /></button>
              <button aria-label="Recent locations"><Chevron dir="down" color="#666" /></button>
              <button aria-label="Up"><ArrowIcon dir="up" color="#555" /></button>
            </NavButtons>
            <AddressBar>
              <MonitorIcon />
              <Chevron dir="right" />
              <Crumb>My Computer</Crumb>
              <Chevron dir="right" />
              <Spacer />
              <RefreshIcon />
            </AddressBar>
            <SearchBox>
              <SearchIcon />
              <SearchInput type="text" placeholder="Search My Computer" aria-label="Search My Computer" />
            </SearchBox>
          </NavRow>
          <Body>
            <SideTree />
            <Content>
              <GroupHeader>
                <Chevron dir="down" size={11} color="#777" />
                Folders (6)
              </GroupHeader>
              <FolderList>
                {folders.map(({ label, kind }) => (
                  <Tile key={label}>
                    <FolderArt kind={kind} />
                    <TileLabel>{label}</TileLabel>
                  </Tile>
                ))}
              </FolderList>
              <GroupHeader>
                <Chevron dir="down" size={11} color="#777" />
                Devices and drives (2)
              </GroupHeader>
              <DriveTile>
                <DriveArt />
                <DriveInfo>
                  <span>Local Disk (C:)</span>
                  <UsageTrack>
                    <UsageFill style={{ width: `${usedShare}%` }} />
                  </UsageTrack>
                  <FreeSpace>95.1 GB free of</FreeSpace>
                </DriveInfo>
              </DriveTile>
            </Content>
          </Body>
          <StatusBar>
            <span>8 items</span>
            <span>1 item selected</span>
            <ViewModes>
              <button aria-label="Details view">
                <svg width="16" height="16" viewBox="0 0 16 16"><path d="M1 1.5h14M1 5.5h14M1 9.5h14M1 13.5h14" stroke="#111" strokeWidth="1.2" /></svg>
              </button>
              <button aria-label="Large icons view">
                <svg width="16" height="16" viewBox="0 0 16 16" fill="none" stroke="#111" strokeWidth="1.2"><rect x="1.6" y=".6" width="12.8" height="10.8" /><path d="M1 13.5h14" /></svg>
              </button>
            </ViewModes>
          </StatusBar>
          <DriveMenu />
          <Pointer><PointerIcon /></Pointer>
        </Window>
      </Desktop>
      <Taskbar>
        <AppList>
          {taskbarApps.map(({ label, icon, active }) => (
            <AppButton key={label} aria-label={label} $active={active}>
              {icon}
            </AppButton>
          ))}
        </AppList>
        <Tray>
          <TrayGroup>
            <CloudOffIcon />
            <ShieldIcon />
          </TrayGroup>
          <KeyboardIcon />
          <TrayGroup>
            <EthernetIcon />
            <SpeakerIcon />
          </TrayGroup>
          <ClockArea>
            <Clock>
              2:37 PM
              <br />
              5/22/2022
            </Clock>
            <Badge>2</Badge>
          </ClockArea>
        </Tray>
      </Taskbar>
    </Screen>
  </>
);

export default App;
